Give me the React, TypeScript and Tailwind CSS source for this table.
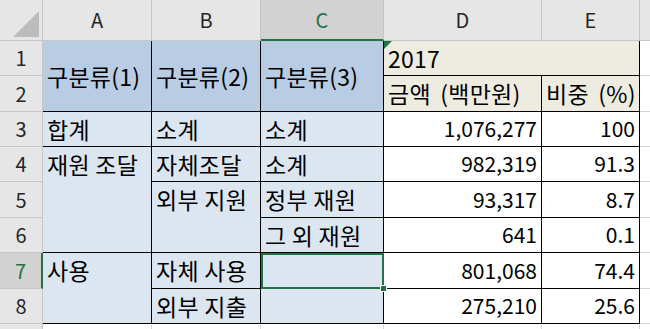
import type { ReactNode } from 'react';

function Cell({ className, children }: { className: string; children?: ReactNode }) {
  return <div className={`flex min-w-0 whitespace-nowrap ${className}`}>{children}</div>;
}

const colHead = 'bg-[#e6e6e6] border-r border-b border-[#c6c6c6] items-center justify-center text-[20px] text-[#262626]';
const rowHead = 'bg-[#e6e6e6] border-r border-b border-[#c6c6c6] items-center justify-center text-[20px] text-[#262626]';
const titleCell = 'bg-[#b8cce4] border-r border-b border-black items-center pl-1 text-[23px] tracking-[0.25px] text-black';
const yearCell = 'bg-[#eeece1] border-r border-b border-black items-center pl-1 text-[23px] tracking-[0.25px] [word-spacing:4px] text-black';
const label = 'bg-[#dce6f1] border-r border-b border-black items-center pl-1 text-[23px] tracking-[0.25px] text-black';
const labelTop = 'bg-[#dce6f1] border-r border-b border-black items-start pl-1 leading-[34px] text-[23px] tracking-[0.25px] text-black';
const num = 'bg-white border-r border-b border-black items-center justify-end pr-1 text-[21px] text-black';
const blank = 'bg-white border-b border-[#d4d4d4]';
const blankRow = 'bg-white border-r border-[#d4d4d4]';

const rows = [
  { b: '소계', c: '소계', d: '1,076,277', e: '100' },
  { b: '자체조달', c: '소계', d: '982,319', e: '91.3' },
  { b: null, c: '정부 재원', d: '93,317', e: '8.7' },
  { b: null, c: '그 외 재원', d: '641', e: '0.1' },
];

export default function App() {
  return (
    <div className="w-[650px] h-[329px] overflow-hidden bg-white font-['Noto_Sans_CJK_KR','Noto_Sans',sans-serif]">
      <div className="grid grid-cols-[43px_109px_109px_123px_158px_98px_1fr] grid-rows-[41px_35px_36px_35px_35px_36px_35px_36px_35px_1fr] h-[329px]">
        {/* column headers */}
        <Cell className="bg-[#e6e6e6] border-r border-b border-[#c6c6c6]">
          <svg width="42" height="40" viewBox="0 0 42 40">
            <polygon points="13,37 39,37 39,11" fill="#bcbcbc" />
          </svg>
        </Cell>
        <Cell className={colHead}>A</Cell>
        <Cell className={colHead}>B</Cell>
        <Cell className="bg-[#d2d2d2] border-r border-[#c6c6c6] border-b-2 border-b-[#217346] items-center justify-center text-[20px] text-[#217346]">C</Cell>
        <Cell className={colHead}>D</Cell>
        <Cell className={colHead}>E</Cell>
        <Cell className="bg-[#e6e6e6] border-b border-[#c6c6c6]" />

        {/* row 1-2 */}
        <Cell className={rowHead}>1</Cell>
        <Cell className={`${titleCell} row-span-2`}>구분류(1)</Cell>
        <Cell className={`${titleCell} row-span-2`}>구분류(2)</Cell>
        <Cell className={`${titleCell} row-span-2`}>구분류(3)</Cell>
        <Cell className={`${yearCell} col-span-2 relative text-[21px]`}>
          <svg className="absolute top-0 left-0" width="8" height="8" viewBox="0 0 8 8">
            <polygon points="0,0 8,0 0,8" fill="#217346" />
          </svg>
          2017
        </Cell>
        <Cell className={blank} />
        <Cell className={rowHead}>2</Cell>
        <Cell className={yearCell}>금액 (백만원)</Cell>
        <Cell className={yearCell}>비중 (%)</Cell>
        <Cell className={blank} />

        {/* row 3 */}
        <Cell className={rowHead}>3</Cell>
        <Cell className={label}>합계</Cell>
        <Cell className={label}>{rows[0].b}</Cell>
        <Cell className={label}>{rows[0].c}</Cell>
        <Cell className={num}>{rows[0].d}</Cell>
        <Cell className={num}>{rows[0].e}</Cell>
        <Cell className={blank} />

        {/* row 4 */}
        <Cell className={rowHead}>4</Cell>
        <Cell className={`${labelTop} row-span-3`}>재원 조달</Cell>
        <Cell className={label}>{rows[1].b}</Cell>
        <Cell className={label}>{rows[1].c}</Cell>
        <Cell className={num}>{rows[1].d}</Cell>
        <Cell className={num}>{rows[1].e}</Cell>
        <Cell className={blank} />

        {/* row 5 */}
        <Cell className={rowHead}>5</Cell>
        <Cell className={`${labelTop} row-span-2`}>외부 지원</Cell>
        <Cell className={label}>{rows[2].c}</Cell>
        <Cell className={num}>{rows[2].d}</Cell>
        <Cell className={num}>{rows[2].e}</Cell>
        <Cell className={blank} />

        {/* row 6 */}
        <Cell className={rowHead}>6</Cell>
        <Cell className={label}>{rows[3].c}</Cell>
        <Cell className={num}>{rows[3].d}</Cell>
        <Cell className={num}>{rows[3].e}</Cell>
        <Cell className={blank} />

        {/* row 7 */}
        <Cell className="bg-[#d2d2d2] border-b border-[#c6c6c6] border-r-2 border-r-[#217346] items-center justify-center text-[20px] text-[#217346]">7</Cell>
        <Cell className={`${labelTop} row-span-2`}>사용</Cell>
        <Cell className={label}>자체 사용</Cell>
        <Cell className={`${label} relative z-10`}>
          <div className="absolute top-0 left-0 -right-px -bottom-px border-2 border-[#217346]" />
          <div className="absolute -right-[4px] -bottom-[4px] w-[7px] h-[7px] bg-[#217346] border border-white" />
        </Cell>
        <Cell className={num}>801,068</Cell>
        <Cell className={num}>74.4</Cell>
        <Cell className={blank} />

        {/* row 8 */}
        <Cell className={rowHead}>8</Cell>
        <Cell className={label}>외부 지출</Cell>
        <Cell className={label} />
        <Cell className={num}>275,210</Cell>
        <Cell className={num}>25.6</Cell>
        <Cell className={blank} />

        {/* row 9 */}
        <Cell className="bg-[#e6e6e6] border-r border-[#c6c6c6]" />
        <Cell className={blankRow} />
        <Cell className={blankRow} />
        <Cell className={blankRow} />
        <Cell className={blankRow} />
        <Cell className={blankRow} />
        <Cell className="bg-white" />
      </div>
    </div>
  );
}
